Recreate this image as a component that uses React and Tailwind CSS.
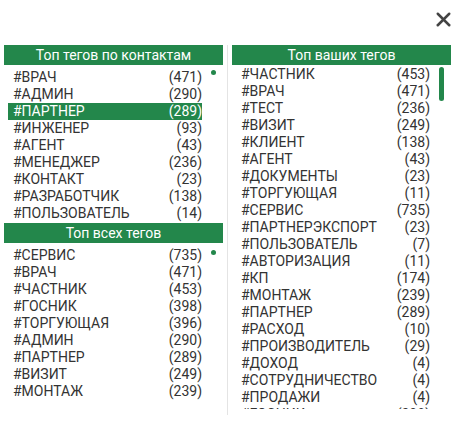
import { X } from 'lucide-react'

const contactTags = [
  ['#ВРАЧ', 471],
  ['#АДМИН', 290],
  ['#ПАРТНЕР', 289],
  ['#ИНЖЕНЕР', 93],
  ['#АГЕНТ', 43],
  ['#МЕНЕДЖЕР', 236],
  ['#КОНТАКТ', 23],
  ['#РАЗРАБОТЧИК', 138],
  ['#ПОЛЬЗОВАТЕЛЬ', 14],
]

const allTags = [
  ['#СЕРВИС', 735],
  ['#ВРАЧ', 471],
  ['#ЧАСТНИК', 453],
  ['#ГОСНИК', 398],
  ['#ТОРГУЮЩАЯ', 396],
  ['#АДМИН', 290],
  ['#ПАРТНЕР', 289],
  ['#ВИЗИТ', 249],
  ['#МОНТАЖ', 239],
]

const yourTags = [
  ['#ЧАСТНИК', 453],
  ['#ВРАЧ', 471],
  ['#ТЕСТ', 236],
  ['#ВИЗИТ', 249],
  ['#КЛИЕНТ', 138],
  ['#АГЕНТ', 43],
  ['#ДОКУМЕНТЫ', 23],
  ['#ТОРГУЮЩАЯ', 11],
  ['#СЕРВИС', 735],
  ['#ПАРТНЕРЭКСПОРТ', 23],
  ['#ПОЛЬЗОВАТЕЛЬ', 7],
  ['#АВТОРИЗАЦИЯ', 11],
  ['#КП', 174],
  ['#МОНТАЖ', 239],
  ['#ПАРТНЕР', 289],
  ['#РАСХОД', 10],
  ['#ПРОИЗВОДИТЕЛЬ', 29],
  ['#ДОХОД', 4],
  ['#СОТРУДНИЧЕСТВО', 4],
  ['#ПРОДАЖИ', 4],
  ['#ГОСНИК', 398],
]

function Header({ title }) {
  return (
    <div className="flex h-[20px] w-[219px] items-center justify-center bg-[#23874b] text-[14px] leading-[20px] text-white">
      {title}
    </div>
  )
}

function TagRow({ name, count, active }) {
  return (
    <div
      className={`flex h-[17px] w-[194px] items-center justify-between pl-[5px] text-[14px] leading-[17px] ${
        active ? 'bg-[#23874b] text-white' : 'text-[#333]'
      }`}
    >
      <span>{name}</span>
      <span>({count})</span>
    </div>
  )
}

function TagList({ tags, activeIndex, className, thumb }) {
  return (
    <div className={`flex overflow-hidden ${className}`}>
      <div className="ml-[4px] flex flex-col">
        {tags.map(([name, count], i) => (
          <TagRow key={name + i} name={name} count={count} active={i === activeIndex} />
        ))}
      </div>
      <div className="w-[21px] shrink-0">{thumb}</div>
    </div>
  )
}

export default function App() {
  return (
    <div className="relative h-[426px] w-[458px] bg-white font-['Roboto',sans-serif]">
      <div className="flex h-[45px] justify-end pr-[3px] pt-[8px]">
        <X className="h-[23px] w-[23px] text-[#444]" strokeWidth={2.6} />
      </div>

      <div className="flex">
        <div className="h-[370px] w-[228px] border-r border-[#e4e4e4] pl-[4px]">
          <Header title="Топ тегов по контактам" />
          <TagList
            tags={contactTags}
            activeIndex={2}
            className="h-[158px] pt-[4px]"
            thumb={<div className="ml-[9px] mt-[1px] h-[5px] w-[5px] rounded-full bg-[#23874b]" />}
          />
          <Header title="Топ всех тегов" />
          <TagList
            tags={allTags}
            className="h-[168px] pt-[4px]"
            thumb={<div className="ml-[9px] mt-[3px] h-[5px] w-[5px] rounded-full bg-[#23874b]" />}
          />
        </div>

        <div className="pl-[4px]">
          <Header title="Топ ваших тегов" />
          <TagList
            tags={yourTags}
            className="h-[344px] pt-[1px]"
            thumb={<div className="ml-[9px] mt-[1px] h-[34px] w-[5px] rounded-full bg-[#23874b]" />}
          />
        </div>
      </div>
    </div>
  )
}
